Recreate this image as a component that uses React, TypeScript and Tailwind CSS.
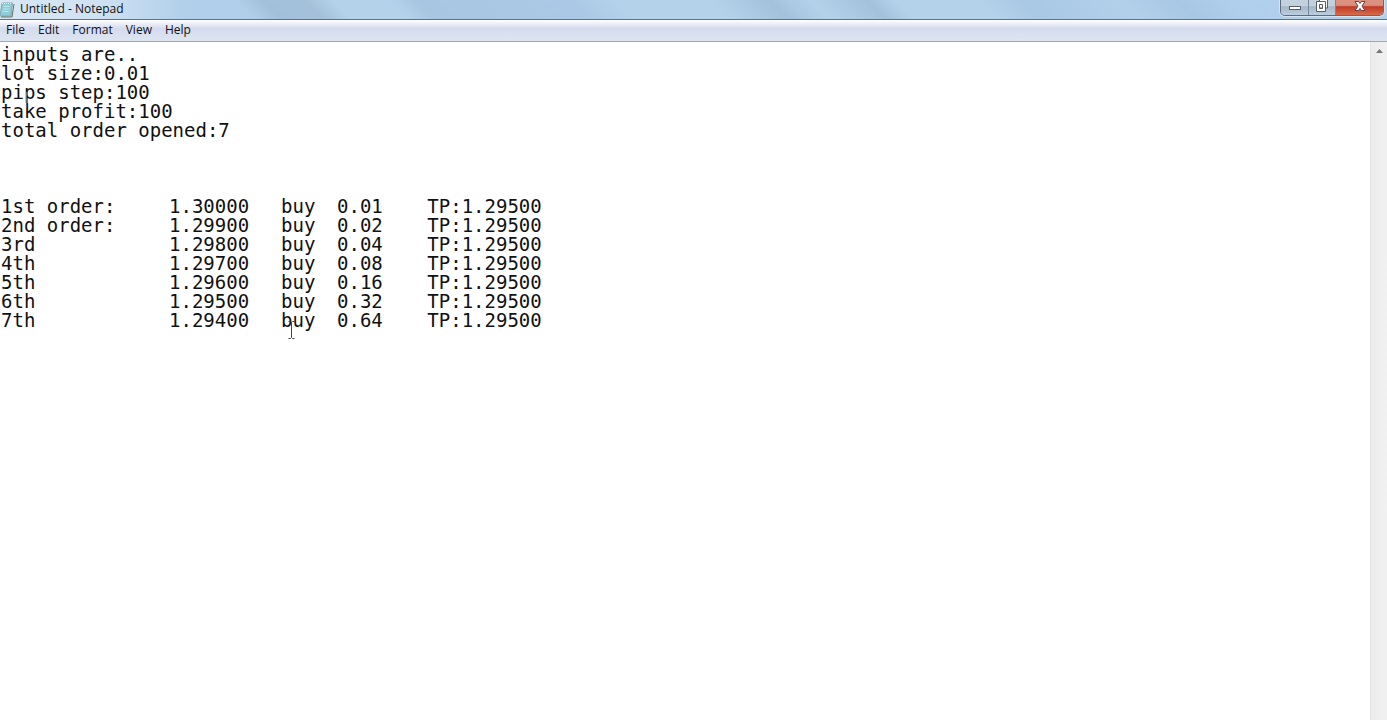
import type { SVGProps } from "react";

const menus = ["File", "Edit", "Format", "View", "Help"];

// Columns sit on the 56px tab grid of the editor.
const note = `inputs are..
lot size:0.01
pips step:100
take profit:100
total order opened:7



1st order:\t1.30000\tbuy\t0.01\t   TP:1.29500
2nd order:\t1.29900\tbuy\t0.02\t   TP:1.29500
3rd\t\t\t1.29800\tbuy\t0.04\t   TP:1.29500
4th\t\t\t1.29700\tbuy\t0.08\t   TP:1.29500
5th\t\t\t1.29600\tbuy\t0.16\t   TP:1.29500
6th\t\t\t1.29500\tbuy\t0.32\t   TP:1.29500
7th\t\t\t1.29400\tbuy\t0.64\t   TP:1.29500`;

const NotepadIcon = (props: SVGProps<SVGSVGElement>) => (
  <svg viewBox="0 0 16 16" aria-hidden="true" {...props}>
    <path d="M2 1h10.5l-1.5 13H0z" fill="#8fccd5" stroke="#7fa9b5" />
    <path d="M2 1.5h10" stroke="#e6f5f7" strokeDasharray="1 1" />
    <path d="M3.5 4.5h6M3 7h6M2.500 9.500h6" stroke="#bfe6ea" />
    <path d="M14 2l-2 13H1" fill="none" stroke="#69735f" />
  </svg>
);

const MinimizeIcon = () => (
  <svg className="h-4 w-4" viewBox="0 0 16 16" aria-hidden="true">
    <rect x="2.500" y="6.500" width="11" height="3" fill="#fff" stroke="#565d6b" />
  </svg>
);

const RestoreIcon = () => (
  <svg className="h-4 w-4" viewBox="0 0 16 16" aria-hidden="true">
    <path d="M5.500 -1h8v9h-8z" fill="#fff" stroke="#565d6b" />
    <path
      d="M2.500 1.500h9v10h-9zM5.500 4.500v4h3v-4z"
      fill="#fff"
      fillRule="evenodd"
      stroke="#565d6b"
    />
  </svg>
);

const CloseIcon = () => (
  <svg className="h-4 w-4" viewBox="0 0 16 16" aria-hidden="true">
    <path
      d="M3 1.500h3.500L8 3.500l1.500-2H13L10 6l3 4.500H9.500L8 8.500l-1.500 2H3L6 6z"
      fill="#fff"
      stroke="#6b4248"
    />
  </svg>
);

const IBeam = (props: SVGProps<SVGSVGElement>) => (
  <svg viewBox="0 0 7 18" fill="none" aria-hidden="true" {...props}>
    <path
      d="M0.500 0.500h2l1 1 1-1h2M3.500 1.500v15M0.500 17.500h2l1-1 1 1h2"
      stroke="#444"
    />
  </svg>
);

const TitleBar = () => (
  <header className="flex h-5 items-start justify-between border-b border-[#66707f] bg-[linear-gradient(45deg,#b1cfea_0%,#b1cfea_18%,#a3c0da_20%,#a5c1da_23%,#b4d2ea_25%,#b4d2ea_29%,#a8c5e1_31%,#abc9e6_42%,#b4d2ea_45%,#b4d2ea_52%,#a3c1da_56%,#b4d2ea_59%,#a3c1da_63%,#b4d2ea_65%,#b4d2ea_71%,#a9c8e4_74%,#b2d0ea_81%,#a8c7e4_85%,#b0cfed_89%,#b4d2ea_100%)]">
    <div className="flex items-center gap-1 bg-linear-to-r from-white/50 via-white/40 to-transparent pr-16">
      <NotepadIcon className="h-4 w-4" />
      <h1 className="h-[19px] text-xs leading-[17px]">Untitled - Notepad</h1>
    </div>
    <div className="mr-[3px] flex h-4 overflow-hidden rounded-b-[5px] border border-t-0 border-[#5c6b7d] shadow-[0_0_0_1px_#d3e3f0]">
      <button
        aria-label="Minimize"
        className="flex w-7 justify-center border-r border-[#75879a] bg-linear-to-b from-[#c3d0dd] from-40% via-[#a4b5c6] via-45% to-[#bccfe0]"
      >
        <MinimizeIcon />
      </button>
      <button
        aria-label="Restore"
        className="flex w-[27px] justify-center border-r border-[#75879a] bg-linear-to-b from-[#c3d0dd] from-40% via-[#a4b5c6] via-45% to-[#bccfe0]"
      >
        <RestoreIcon />
      </button>
      <button
        aria-label="Close"
        className="flex w-[47px] justify-center bg-linear-to-b from-[#dc9080] from-35% via-[#c03a24] via-45% to-[#d8694a]"
      >
        <CloseIcon />
      </button>
    </div>
  </header>
);

const MenuBar = () => (
  <nav className="flex h-[22px] gap-[13px] border-b border-[#9aa6c2] bg-linear-to-b from-white via-[#d5dbee] via-40% to-[#dde5f0] px-1.5 text-xs">
    {menus.map((menu) => (
      <button key={menu} className="pb-0.5">
        {menu}
      </button>
    ))}
  </nav>
);

const App = () => {
  return (
    <div className="flex min-h-screen flex-col bg-white font-['Open_Sans',sans-serif] text-[#111]">
      <TitleBar />
      <MenuBar />
      <main className="relative flex flex-1">
        <textarea
          aria-label="Document text"
          defaultValue={note}
          spellCheck={false}
          className="flex-1 resize-none overflow-hidden pt-[3px] pl-px font-['DejaVu_Sans_Mono',monospace] text-[19px] leading-[19px] outline-none [tab-size:56px]"
        />
        <div className="flex w-[17px] flex-col border-l border-[#e6e6e6] bg-linear-to-r from-[#ececec] to-[#f1f1f1]">
          <button
            aria-label="Scroll up"
            className="flex h-[17px] items-center justify-center"
          >
            <svg className="h-1 w-[7px]" viewBox="0 0 7 4" aria-hidden="true">
              <path d="M3.500 0L7 4H0z" fill="#777" />
            </svg>
          </button>
        </div>
        <div className="pointer-events-none absolute top-[50px] left-[26px] h-4 w-px bg-[#666]" />
        <IBeam className="pointer-events-none absolute top-[279px] left-[288px] h-[18px] w-[7px]" />
      </main>
    </div>
  );
};

export default App;
